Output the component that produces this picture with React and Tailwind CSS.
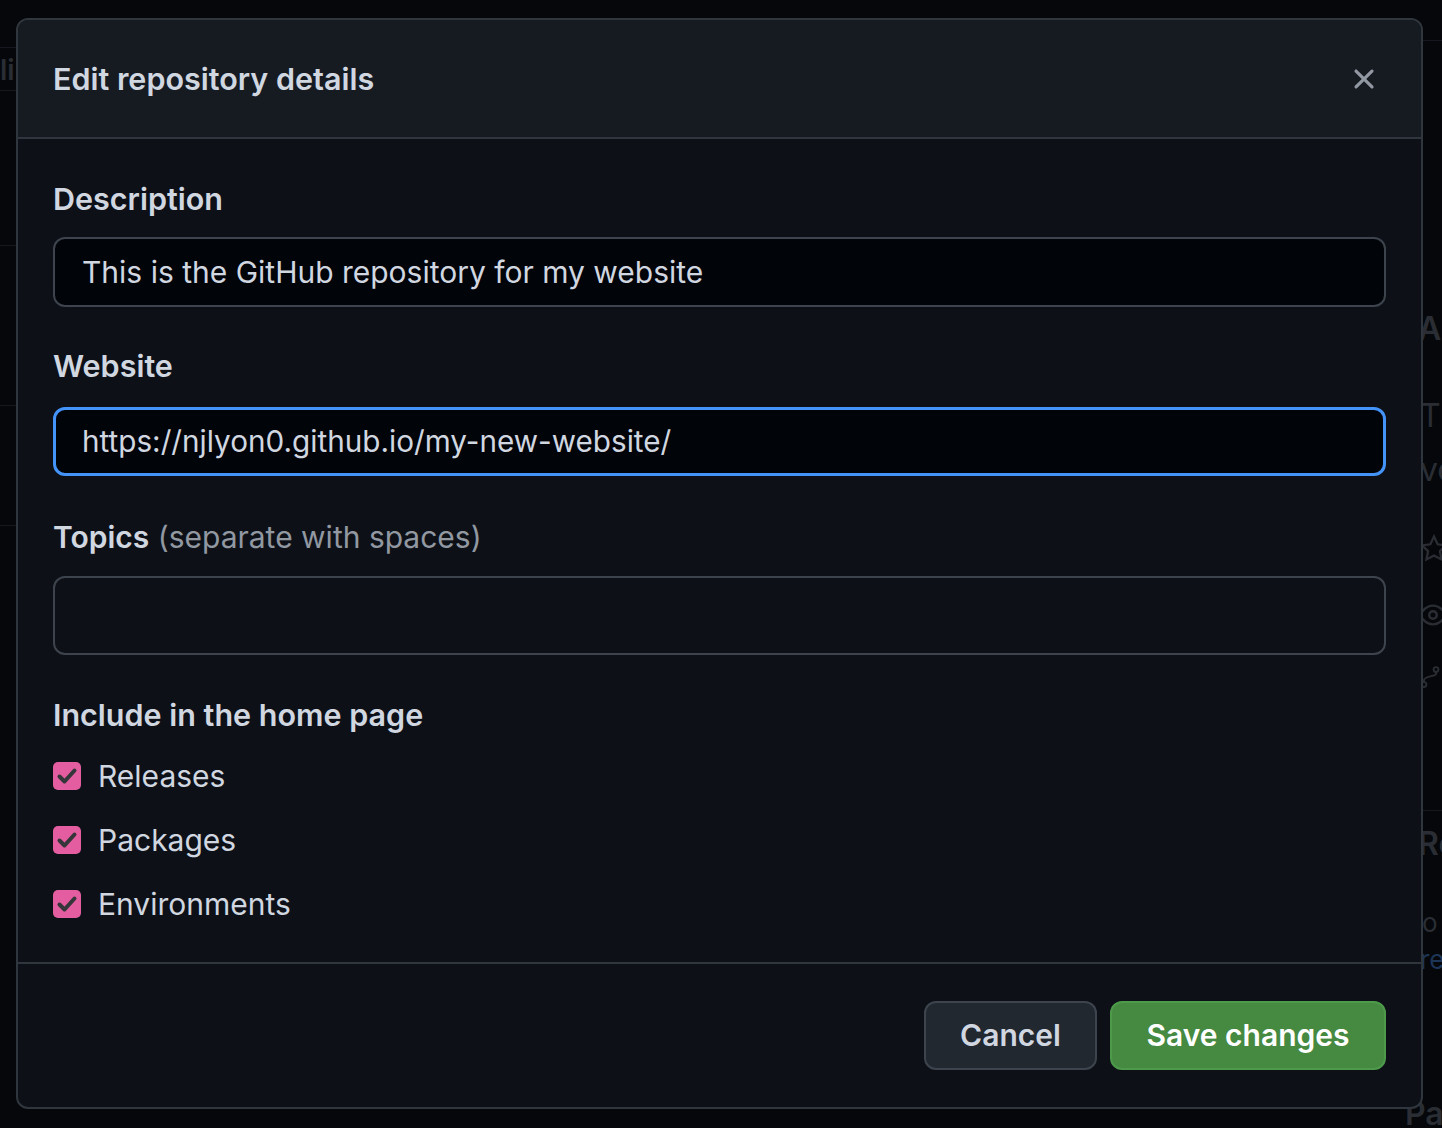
import React from 'react';

const font = { fontFamily: 'Inter, "Noto Sans", "Liberation Sans", sans-serif' };

function Check() {
  return (
    <span className="flex h-[28px] w-[28px] shrink-0 items-center justify-center rounded-[5px] bg-[#e35da0]">
      <svg viewBox="0 0 28 28" className="h-[28px] w-[28px]" fill="none" stroke="#35363a" strokeWidth="4" strokeLinecap="round" strokeLinejoin="round">
        <polyline points="6.5,14.5 11.5,19.5 21.5,8.5" />
      </svg>
    </span>
  );
}

function Option({ label }) {
  return (
    <label className="flex h-[36px] items-center gap-[17px]">
      <Check />
      <span className="text-[30px] text-[#d1d7e0]">{label}</span>
    </label>
  );
}

const faint = 'absolute text-[#2a2e34]';

export default function App() {
  return (
    <div className="relative h-[1128px] w-[1442px] overflow-hidden bg-[#05070a]" style={font}>
      {/* page behind the overlay */}
      <div className="absolute left-0 top-[47px] h-[44px] w-[16px] overflow-hidden border-y border-[#15191f] text-[28px] font-semibold leading-[44px] text-[#2a2e34]">li</div>
      <div className="absolute left-0 top-[245px] w-[16px] border-t border-[#15191f]" />
      <div className="absolute left-0 top-[405px] w-[16px] border-t border-[#15191f]" />
      <div className="absolute left-0 top-[525px] w-[16px] border-t border-[#15191f]" />
      <div className="absolute left-[1422px] top-[40px] w-[20px] border-t border-[#15191f]" />
      <div className={`${faint} left-[1418px] top-[305px] text-[32px] font-semibold`}>Ab</div>
      <div className={`${faint} left-[1420px] top-[392px] text-[32px]`}>Th</div>
      <div className={`${faint} left-[1420px] top-[446px] text-[32px]`}>ve</div>
      <svg className="absolute left-[1420px] top-[534px]" width="28" height="30" viewBox="0 0 16 16" fill="none" stroke="#2a2e34" strokeWidth="1.3">
        <path d="M8 .9l2.1 4.4 4.8.6-3.5 3.3.9 4.8L8 11.7 3.7 14l.9-4.8L1.1 5.9l4.8-.6z" />
      </svg>
      <svg className="absolute left-[1418px] top-[600px]" width="30" height="30" viewBox="0 0 16 16" fill="none" stroke="#2a2e34" strokeWidth="1.3">
        <path d="M1 8s2.5-5 7-5 7 5 7 5-2.5 5-7 5-7-5-7-5z" />
        <circle cx="8" cy="8" r="2" />
      </svg>
      <svg className="absolute left-[1418px] top-[662px]" width="24" height="30" viewBox="0 0 16 16" fill="none" stroke="#2a2e34" strokeWidth="1.3">
        <circle cx="12" cy="3" r="1.6" />
        <circle cx="4" cy="13" r="1.6" />
        <path d="M12 4.6v1.4c0 1.5-8 1.5-8 4v1.4" />
      </svg>
      <div className="absolute left-[1422px] top-[810px] w-[20px] border-t border-[#15191f]" />
      <div className={`${faint} left-[1418px] top-[820px] text-[32px] font-semibold`}>Re</div>
      <div className={`${faint} left-[1422px] top-[903px] text-[26px]`}>o</div>
      <div className="absolute left-[1420px] top-[940px] text-[26px] text-[#1d3557]">re</div>
      <div className={`${faint} left-[1405px] top-[1090px] text-[32px] font-semibold`}>Pa</div>

      {/* dialog */}
      <div className="absolute left-[16px] top-[18px] flex h-[1091px] w-[1407px] flex-col overflow-hidden rounded-[12px] border-2 border-[#30363d] bg-[#0d1117]">
        <div className="flex h-[119px] shrink-0 items-center justify-between border-b-2 border-[#30363d] bg-[#161b22] pl-[35px] pr-[40px]">
          <h1 className="text-[30.5px] font-semibold text-[#d1d7e0]">Edit repository details</h1>
          <svg viewBox="0 0 16 16" className="h-[34px] w-[34px]" fill="#9198a1">
            <path d="M3.72 3.72a.75.75 0 0 1 1.06 0L8 6.94l3.22-3.22a.749.749 0 0 1 1.275.326.749.749 0 0 1-.215.734L9.06 8l3.22 3.22a.749.749 0 0 1-.326 1.275.749.749 0 0 1-.734-.215L8 9.06l-3.22 3.22a.751.751 0 0 1-1.042-.018.751.751 0 0 1-.018-1.042L6.94 8 3.72 4.78a.75.75 0 0 1 0-1.06Z" />
          </svg>
        </div>

        <div className="flex flex-1 flex-col px-[35px] pt-[40px]">
          <label className="text-[30.5px] font-semibold leading-[40px] text-[#d1d7e0]">Description</label>
          <div className="mt-[18px] flex h-[70px] items-center rounded-[12px] border-2 border-[#3d444d] bg-[#010409] px-[27px] text-[30px] text-[#d1d7e0]">
            This is the GitHub repository for my website
          </div>

          <label className="mt-[39px] text-[30.5px] font-semibold leading-[40px] text-[#d1d7e0]">Website</label>
          <div className="mt-[21px] flex h-[69px] items-center rounded-[12px] border-[3px] border-[#4493f8] bg-[#010409] px-[26px] text-[29.7px] text-[#d1d7e0]">
            https://njlyon0.github.io/my-new-website/
          </div>

          <label className="mt-[41px] text-[30px] leading-[40px] text-[#d1d7e0]">
            <span className="font-semibold">Topics</span> <span className="text-[#9198a1]">(separate with spaces)</span>
          </label>
          <div className="mt-[19px] h-[79px] rounded-[12px] border-2 border-[#3d444d] bg-[#0d1117]" />

          <h2 className="mt-[40px] text-[30.5px] font-semibold leading-[40px] text-[#d1d7e0]">Include in the home page</h2>
          <div className="mt-[23px] flex flex-col gap-[28px]">
            <Option label="Releases" />
            <Option label="Packages" />
            <Option label="Environments" />
          </div>
        </div>

        <div className="flex h-[145px] shrink-0 items-center justify-end gap-[13px] border-t-2 border-[#30363d] pr-[35px]">
          <button className="h-[69px] w-[173px] rounded-[12px] border-2 border-[#3d444d] bg-[#212830] text-[30px] font-semibold text-[#d1d7e0]">Cancel</button>
          <button className="h-[69px] w-[276px] rounded-[12px] border-2 border-[#4d9a4a] bg-[#468941] text-[30px] font-semibold text-white">Save changes</button>
        </div>
      </div>
    </div>
  );
}
